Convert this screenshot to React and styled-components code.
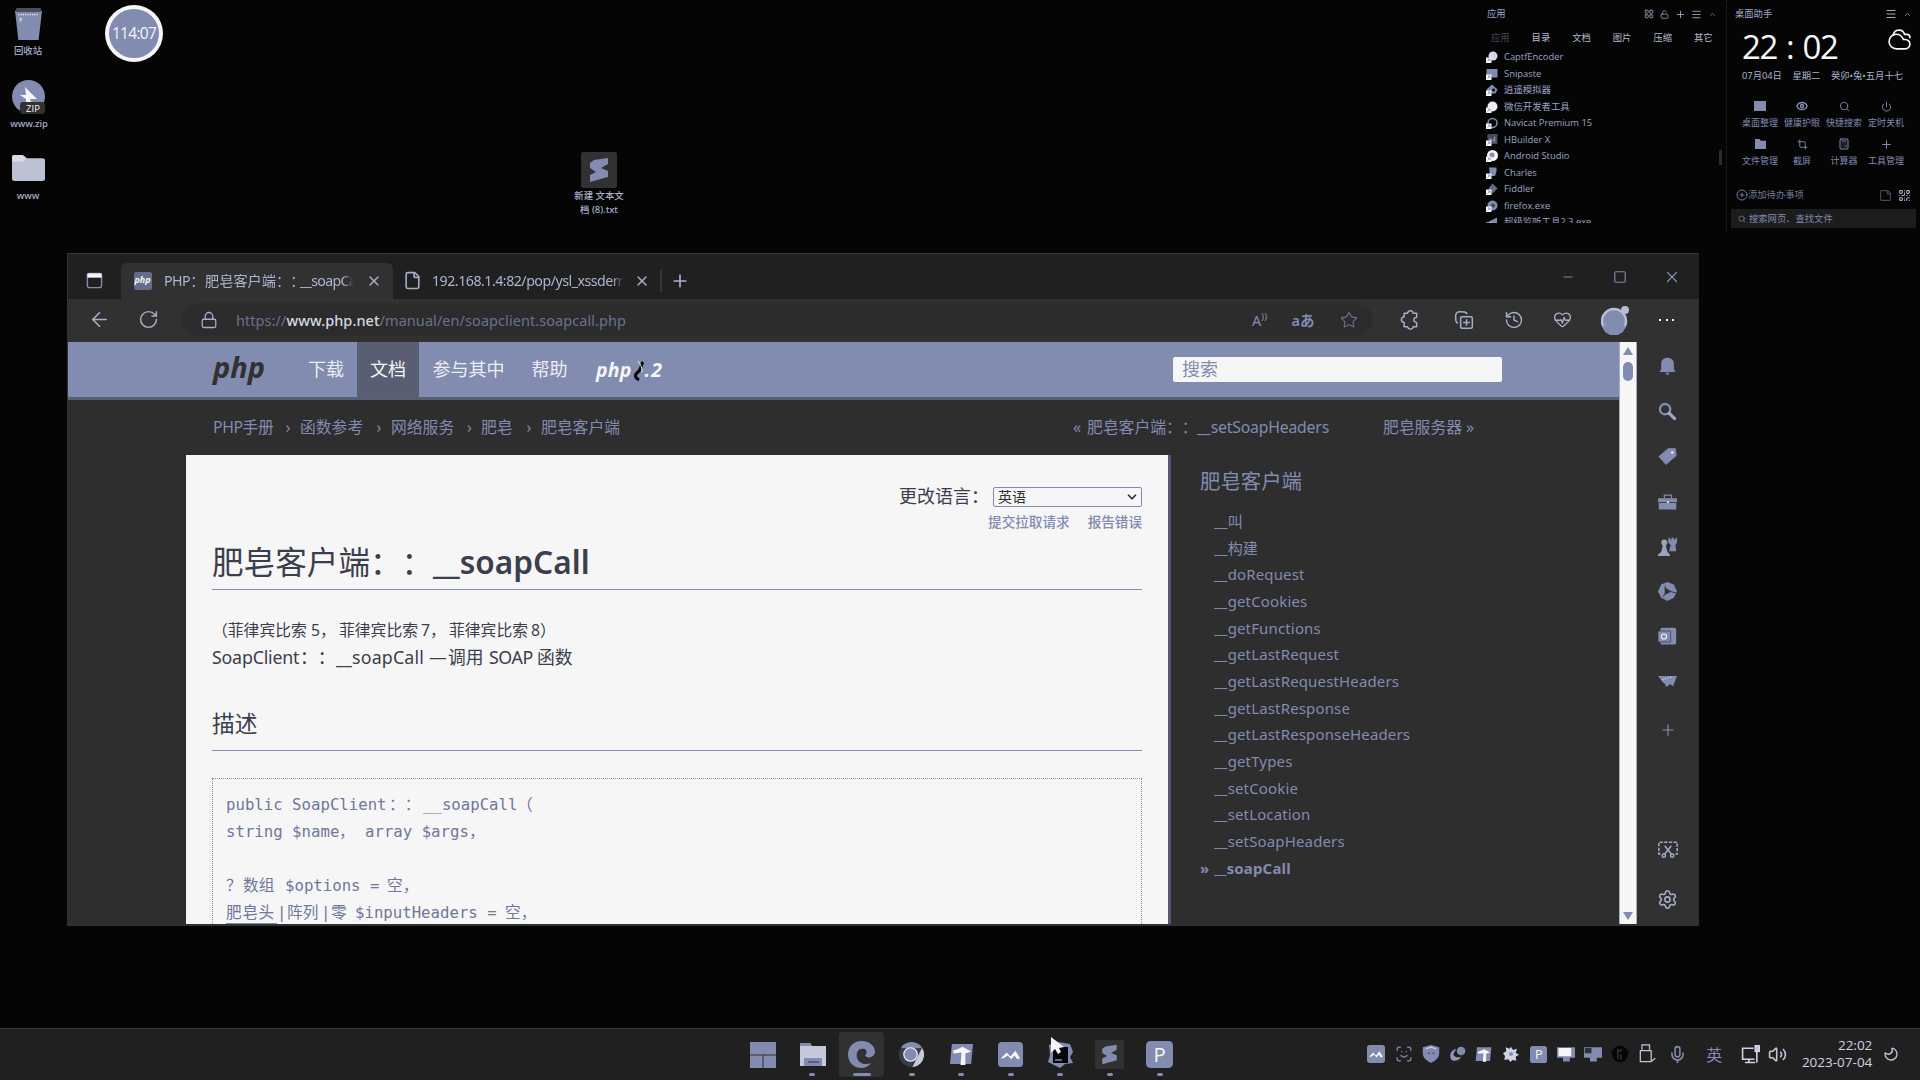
import React from "react";
import styled, { createGlobalStyle, css } from "styled-components";
import {
  ArrowLeft, RotateCw, Lock, Star, History, HeartPulse, X, Plus, File, Menu, ChevronUp,
  Cloudy, Eye, Search, Power, Crop, Calculator, QrCode, CirclePlus, StickyNote, Mic, Volume2, Moon,
  Settings, Minus, Square, LayoutGrid, LockOpen, ScanFace, ChevronDown,
} from "lucide-react";

const ink = "#050505";
const panel = "#313131";
const blue = "#828bb0";
const white = "#f6f6f6";
const sans = `"Noto Sans", "Noto Sans CJK SC", sans-serif`;

const Global = createGlobalStyle`
  html, body { margin: 0; background: ${ink}; }
  * { box-sizing: border-box; }
  svg { display: block; flex: none; }
`;

const Desktop = styled.div`
  position: relative;
  width: 1920px;
  height: 1080px;
  overflow: hidden;
  background: ${ink};
  font-family: ${sans};
  color: ${blue};
  white-space: nowrap;
  text-spacing-trim: space-all;
  font-feature-settings: "chws" 0;
`;

/* ---------- shared ---------- */
const Slot = styled.div`
  width: ${(p) => p.$w}px;
  height: ${(p) => (p.$h ? p.$h + "px" : "auto")};
  flex: none;
  display: flex;
  align-items: center;
  justify-content: center;
`;
const Txt = styled.span`
  display: block;
  flex: none;
  width: ${(p) => (p.$w ? p.$w + "px" : "auto")};
  letter-spacing: ${(p) => p.$ls || 0}px;
`;
const Crescent = styled(Moon)`
  transform: scaleX(-1) rotate(-10deg);
`;

/* ---------- desktop shortcuts ---------- */
const Shortcut = styled.div`
  position: absolute;
  left: ${(p) => p.$x}px;
  top: ${(p) => p.$y}px;
  width: 64px;
  display: flex;
  flex-direction: column;
  align-items: center;
  font: 500 9.4px/13.5px ${sans};
  color: #aab1cc;
  text-align: center;
  white-space: pre;
`;
const Art = styled.div`
  height: ${(p) => p.$h}px;
  margin-bottom: ${(p) => p.$gap}px;
`;
const Timer = styled.div`
  position: absolute;
  left: 105px;
  top: 5px;
  width: 58px;
  height: 57px;
  border-radius: 50%;
  border: 4px solid ${white};
  background: ${blue};
  color: ${white};
  display: flex;
  align-items: center;
  justify-content: center;
  padding-bottom: 1px;
  font: 15.5px/20px "Open Sans", sans-serif;
  letter-spacing: -0.7px;
`;

/* ---------- apps panel ---------- */
const Apps = styled.section`
  position: absolute;
  left: 1484px;
  top: 4px;
  width: 243px;
  height: 219px;
  overflow: hidden;
  font-size: 9.3px;
  line-height: 16px;
  color: #9ba3c3;
`;
const AppsHead = styled.header`
  height: 20px;
  padding-left: 3px;
  display: flex;
  align-items: center;
`;
const HeadIcons = styled.div`
  margin-left: 135px;
  display: flex;
`;
const AppTabs = styled.nav`
  height: 25px;
  padding: 2px 0 0 7px;
  display: flex;
  align-items: center;
  color: #b3bad2;
`;
const AppTab = styled.span`
  flex: none;
  width: 40.6px;
  color: ${(p) => (p.$dim ? "#454857" : "inherit")};
`;
const AppRow = styled.div`
  height: 16.5px;
  padding-left: 2px;
  display: flex;
  align-items: center;
  gap: 6px;
  font-family: "Open Sans", "Noto Sans CJK SC", sans-serif;
  font-size: 9.4px;
`;
const Thumb = styled.div`
  position: absolute;
  left: 1719px;
  top: 150px;
  width: 3px;
  height: 15px;
  background: #2b2b2b;
`;
const Divider = styled.div`
  position: absolute;
  left: 1726px;
  top: 0;
  height: 232px;
  border-left: 1px dotted #242424;
`;

/* ---------- assistant panel ---------- */
const Assist = styled.section`
  position: absolute;
  left: 1731px;
  top: 4px;
  width: 185px;
  font-size: 9.3px;
  line-height: 14px;
`;
const AssistHead = styled.header`
  height: 21px;
  padding: 0 0 1px 4px;
  display: flex;
  align-items: center;
  color: #a3abc8;
`;
const ClockRow = styled.div`
  height: 40px;
  padding: 0 4px 0 11px;
  display: flex;
  align-items: flex-start;
  justify-content: space-between;
  color: ${white};
`;
const CloudBox = styled.div`
  padding-top: 2px;
`;
const Clock = styled.span`
  font: 33px/40px "Open Sans", sans-serif;
  letter-spacing: -1.4px;
  word-spacing: 2px;
  padding-top: 2px;
`;
const DateRow = styled.div`
  height: 22px;
  padding: 0 13px 0 11px;
  display: flex;
  align-items: center;
  justify-content: space-between;
  color: #aab1cc;
`;
const ToolGrid = styled.div`
  margin-top: 12px;
  padding-left: 8px;
  display: grid;
  grid-template-columns: repeat(4, 42px);
  grid-auto-rows: 38px;
`;
const Tool = styled.div`
  display: flex;
  flex-direction: column;
  align-items: center;
  color: ${blue};
  font-size: 9px;
  line-height: 12px;
  gap: 4px;
`;
const ToolIcon = styled.div`
  height: 14px;
  display: flex;
  align-items: center;
`;
const TodoRow = styled.div`
  margin-top: 10px;
  height: 20px;
  padding: 0 5px;
  display: flex;
  align-items: center;
  color: #737b9c;
`;
const FindBar = styled.div`
  margin-top: 4px;
  height: 19px;
  padding-left: 6px;
  background: #1c1c1c;
  display: flex;
  align-items: center;
  gap: 3px;
`;

/* ---------- browser window ---------- */
const Browser = styled.main`
  position: absolute;
  left: 67px;
  top: 253px;
  width: 1632px;
  height: 673px;
  background: ${panel};
  display: flex;
  flex-direction: column;
  border-left: 1px solid ${panel};
  border-top: 1px solid #3a3a3a;
  overflow: hidden;
`;
const TitleBar = styled.div`
  height: 45px;
  flex: none;
  background: #202020;
  display: flex;
  align-items: flex-end;
`;
const Tab = styled.div`
  width: ${(p) => p.$w}px;
  height: 36px;
  padding-bottom: 1px;
  display: flex;
  align-items: center;
  font: 14.2px/20px ${sans};
  ${(p) => p.$active && css`background: ${panel}; border-radius: 6px 6px 0 0;`}
`;
const TabTitle = styled.span`
  display: flex;
  width: ${(p) => p.$w}px;
  letter-spacing: ${(p) => p.$ls}px;
  overflow: hidden;
  color: #adb4ce;
  mask-image: linear-gradient(90deg, #000 94%, transparent);
`;
const Favicon = styled.span`
  width: 18px;
  height: 18px;
  border-radius: 2px;
  background: #656c8a;
  color: ${white};
  font: italic bold 9px/16px ${sans};
  text-align: center;
`;
const TabSep = styled.div`
  width: 2px;
  height: 22px;
  margin-bottom: 7px;
  background: #353535;
`;
const ToolBar = styled.div`
  height: 43px;
  flex: none;
  display: flex;
  align-items: center;
  padding-bottom: 2px;
`;
const Address = styled.div`
  width: 1191px;
  height: 33px;
  border-radius: 17px;
  background: #2c2c2c;
  display: flex;
  align-items: center;
  font: 14.5px/20px ${sans};
  color: #6a7190;
`;
const Host = styled.b`
  font-weight: 500;
  color: #d5d8e4;
`;
const Url = styled.span`
  width: 1008px;
  letter-spacing: ${(p) => p.$ls}px;
`;
const AddrText = styled.span`
  color: ${blue};
  font-weight: ${(p) => (p.$strong ? 600 : 400)};
`;
const Body = styled.div`
  flex: none;
  height: 583px;
  display: flex;
`;
const Page = styled.div`
  width: 1551px;
  height: 582px;
  overflow: hidden;
  background: #2e2e2e;
`;
const PhpNav = styled.nav`
  height: 58px;
  background: ${blue};
  border-bottom: 3px solid #5a5f72;
  display: flex;
  align-items: center;
  font: 18px/54px ${sans};
  color: #eceef4;
`;
const PhpLogo = styled.span`
  width: 227px;
  padding: 0 0 6px 145px;
  font: italic bold 29px/44px "Open Sans", sans-serif;
  color: ${panel};
`;
const ReleaseLogo = styled.span`
  width: 84px;
  padding-left: 15px;
  display: flex;
  align-items: center;
  font: italic bold 19.5px/50px "Open Sans", sans-serif;
  color: ${white};
`;
const NavItem = styled.a`
  padding: 0 ${(p) => p.$px || 13}px;
  height: 55px;
  background: ${(p) => (p.$on ? "#595e72" : "transparent")};
  color: ${(p) => (p.$on ? white : "inherit")};
`;
const SearchBox = styled.div`
  margin-left: 508px;
  width: 329px;
  height: 25px;
  margin-bottom: 1px;
  padding-left: 9px;
  border-radius: 2px;
  background: ${white};
  color: ${blue};
  line-height: 24px;
`;
const Crumbs = styled.div`
  height: 55px;
  padding: 0 0 1px 145px;
  display: flex;
  align-items: center;
  font: 15.8px/20px ${sans};
`;
const Columns = styled.div`
  display: flex;
  align-items: flex-start;
  padding-left: 118px;
`;
const Article = styled.article`
  width: 982px;
  height: 480px;
  padding: 27px 26px 0;
  background: ${white};
  color: #3b3e4c;
`;
const LangRow = styled.div`
  height: 28px;
  display: flex;
  align-items: center;
  justify-content: flex-end;
  font-size: 18px;
  line-height: 28px;
`;
const Select = styled.div`
  width: 149px;
  height: 20px;
  margin: 1px 0 0 4px;
  padding: 0 2px 0 4px;
  border: 1px solid ${blue};
  border-radius: 2px;
  display: flex;
  align-items: center;
  justify-content: space-between;
  font-size: 14px;
  line-height: 18px;
  color: ${panel};
`;
const EditLinks = styled.div`
  margin-top: 2px;
  height: 20px;
  display: flex;
  justify-content: flex-end;
  gap: 18px;
  font: 500 13.6px/19px ${sans};
  color: ${blue};
`;
const H1 = styled.h1`
  margin: 8px 0 0;
  padding-bottom: 5px;
  border-bottom: 1px solid ${blue};
  display: flex;
  font: 400 31.6px/44px ${sans};
`;
const H1Name = styled.span`
  font-weight: 600;
`;
const VerInfo = styled.p`
  margin: 27px 0 0;
  display: flex;
  font: 15.8px/26px ${sans};
`;
const RefName = styled.p`
  margin: 1px 0 0;
  display: flex;
  font: 17.8px/26px ${sans};
`;
const H2 = styled.h2`
  margin: 39px 0 0;
  padding-bottom: 11px;
  border-bottom: 1px solid ${blue};
  font: 22.7px/30px ${sans};
`;
const Synopsis = styled.div`
  margin-top: 27px;
  height: 180px;
  padding: 12px 13px;
  border: 1px dotted ${blue};
  font: 15.7px/27px "DejaVu Sans Mono", "Noto Sans CJK SC", monospace;
  color: #6f779b;
`;
const CodeLine = styled.div`
  height: 27px;
  display: flex;
`;
const Linked = styled.span`
  width: 51px;
  height: 25px;
  letter-spacing: 0.6px;
  border-bottom: 1px solid ${blue};
`;
const Aside = styled.aside`
  width: 420px;
  height: 480px;
  border-left: 3px solid #545971;
  padding: 11px 0 0 29px;
`;
const AsideTitle = styled.div`
  font-size: 20.4px;
  line-height: 30px;
  margin-bottom: 11.5px;
`;
const Method = styled.div`
  height: 26.7px;
  display: flex;
  align-items: center;
  font-size: 15px;
  letter-spacing: 0.15px;
  font-weight: ${(p) => (p.$on ? 700 : 400)};
`;
const Marker = styled.span`
  width: 14px;
`;
const ScrollBar = styled.div`
  width: 18px;
  height: 582px;
  background: ${white};
  border-left: 1px solid #a6acc5;
  border-right: 1px solid #a6acc5;
  display: flex;
  flex-direction: column;
  align-items: center;
  padding: 5px 0 4px;
`;
const Arrow = styled.div`
  border: 5px solid transparent;
  ${(p) => (p.$down
    ? css`border-top: 8px solid ${blue}; border-bottom: 0; margin-top: auto;`
    : css`border-bottom: 8px solid ${blue}; border-top: 0;`)}
`;
const Grip = styled.div`
  margin-top: 7px;
  width: 10px;
  height: 19px;
  border-radius: 5px;
  background: ${blue};
`;
const SideBar = styled.div`
  width: 61px;
  display: flex;
  flex-direction: column;
  align-items: center;
  padding-top: 2px;
`;

/* ---------- taskbar ---------- */
const TaskBar = styled.footer`
  position: absolute;
  left: 0;
  top: 1028px;
  width: 1920px;
  height: 52px;
  padding-left: 738px;
  background: #202020;
  border-top: 1px solid #3a3a3a;
  display: flex;
  align-items: center;
`;
const TaskItem = styled.div`
  width: 49.6px;
  height: 50px;
  padding-top: 2px;
  display: flex;
  flex-direction: column;
  align-items: center;
`;
const TaskTile = styled.div`
  width: 45px;
  height: 45px;
  padding: 9px 0 1px;
  border-radius: 4px;
  background: ${(p) => (p.$on ? panel : "transparent")};
  display: flex;
  flex-direction: column;
  align-items: center;
  justify-content: space-between;
`;
const Bar = styled.div`
  width: ${(p) => p.$w}px;
  height: 3px;
  border-radius: 2px;
  background: ${blue};
`;
const LetterTile = styled.div`
  width: ${(p) => p.$s}px;
  height: ${(p) => p.$s}px;
  border-radius: ${(p) => p.$s / 6}px;
  background: ${blue};
  color: ${white};
  font: ${(p) => p.$s * 0.75}px/${(p) => p.$s}px "Open Sans", sans-serif;
  text-align: center;
`;
const Tray = styled.div`
  margin-left: 178px;
  display: flex;
  align-items: center;
  padding-bottom: 1px;
  color: ${blue};
`;
const TrayClock = styled.div`
  width: 85px;
  padding-bottom: 1px;
  font: 13.5px/17px "Open Sans", sans-serif;
  color: #d0d4e2;
  text-align: right;
`;
const Cursor = styled.div`
  position: absolute;
  left: 1050px;
  top: 1036px;
`;

/* ---------- drawings ---------- */
const Svg = ({ s = 24, w, h, vb = 24, children }) => (
  <svg width={w || s} height={h || s} viewBox={`0 0 ${vb} ${vb}`} preserveAspectRatio="none" fill={blue}>{children}</svg>
);
const SublimeMark = ({ s = 36 }) => (
  <Svg s={s} vb={36}>
    <rect width="36" height="36" rx="2" fill={panel} />
    <path d="M27 6v6l-7 4 7 3v6L9 30v-7l6-3-6-4v-5l4-3z" />
  </Svg>
);
const Folder = ({ w = 33, h = 26 }) => (
  <Svg w={w} h={h}>
    <path d="M0 2q0-2 2-2h6l3 3h11q2 0 2 2v17q0 2-2 2H2q-2 0-2-2z" fill="#bcc1d5" />
    <path d="M0 4V2q0-2 2-2h5l3 3-2 3H0z" fill="#d9dce7" />
  </Svg>
);
const Wave = ({ s }) => (
  <Svg s={s} vb={26}>
    <rect width="26" height="26" rx="4" />
    <path d="M3 17l6-6 4 4 5-6 5 8-3 1-3-4-3 4-4-4-4 3z" fill={white} />
  </Svg>
);
const Hammer = ({ s }) => (
  <Svg s={s} vb={26}>
    <path d="M3 2h22l-2 21H1z" />
    <path d="M4 9l6-2 4-2 9 5-6 2v12h-5l1-13-8 1z" fill={white} />
  </Svg>
);
const Edge = ({ s = 27 }) => (
  <Svg s={s} vb={28}>
    <path d="M14 0c8 0 14 5 14 11 0 4-3 6-6 6-4 0-5-2-3-4 1-3-1-5-4-5-4 0-6 3-6 7 0 6 6 10 15 8-3 3-6 5-10 5C6 28 0 22 0 14S6 0 14 0z" />
    <path d="M10 18c2 4 7 6 12 5-4 2-10 1-12-5z" fill={panel} />
  </Svg>
);
const Chrome = ({ s = 27 }) => (
  <Svg s={s} vb={28}>
    <circle cx="14" cy="14" r="13" fill="#3a3c46" />
    <path d="M3 7a13 13 0 0 1 22 0L14 8z" />
    <path d="M25 7a13 13 0 0 1-10 20l5-10z" fill="#c6cadb" />
    <circle cx="13" cy="14" r="7" stroke={white} strokeWidth="1.2" />
  </Svg>
);
const Knot = () => (
  <Svg s={28} vb={28}>
    <path d="M3 4l9-3 12 2 3 8-3 5 3 6-8 1-5 4-6-3-6-3 2-7z" />
    <rect x="7" y="6" width="15" height="16" fill={ink} />
    <path d="M9 19h7" stroke={blue} strokeWidth="1.5" />
  </Svg>
);
const Shield = () => (
  <Svg s={18}><path d="M12 0l11 3v8c0 6-5 10-11 13C6 21 1 17 1 11V3z" /><path d="M5 5l7-2 7 2" stroke={white} fill="none" /><circle cx="9" cy="11" r="1" fill={panel} /><circle cx="15" cy="11" r="1" fill={panel} /></Svg>
);
const Screen = ({ lit }) => (
  <Svg s={18}><path d="M0 3h24v14h-7v5H8v-5H0z" />{lit ? <path d="M2 4h17v11H2z" fill={white} /> : <path d="M1 4h9v7H1z" fill={panel} />}</Svg>
);
const Usb = () => (
  <Svg s={20}><g fill="none" stroke="#c0c5d8" strokeWidth="1.5"><path d="M6 7V1h9v6M4 8h13v13H4zM17 21l5-4" /></g></Svg>
);
const Network = () => (
  <Svg s={19}><g fill="none" stroke="#d0d4e2" strokeWidth="2"><path d="M16 4H2v14h15M5 22h13M10 18v4" /><rect x="18" y="1" width="5" height="7" fill="#c0c5d8" /><path d="M20 8v14" /></g></Svg>
);
const Avatar = () => (
  <svg width="30" height="30" viewBox="0 0 30 30">
    <circle cx="13" cy="16" r="12" fill={blue} stroke="#b7bdd3" strokeWidth="2.5" />
    <path d="M1 21h24l-3 6-5 3H9l-5-3z" fill={blue} />
    <circle cx="24" cy="5" r="4" fill="#b7bdd3" />
  </svg>
);
const dotIcons = {
  bell: <path d="M12 1c5 0 8 3 8 8v6l2 4H2l2-4V9c0-5 3-8 8-8zM9 20h6l-3 3z" />,
  lens: <g><circle cx="9" cy="9" r="6.5" fill="none" stroke={blue} strokeWidth="3" /><path d="M14 14l7 7" stroke="#a0a8c6" strokeWidth="4" strokeLinecap="round" /></g>,
  tag: <g><path d="M1 12L13 2l9 0 1 9-13 11z" strokeLinejoin="round" stroke={blue} /><circle cx="18" cy="7" r="1.6" fill={white} /></g>,
  box: <g><path d="M0 8h24v5H0zM1 14h22v8H1z" /><path d="M8 8V4h9v4" fill="none" stroke={blue} strokeWidth="1.6" /><circle cx="12.5" cy="13" r="1.3" fill={white} /></g>,
  chess: <g><path d="M13 1h2v2h2V1h3v2h2V1h2v6l-2 3 1 8h-9l2-8-3-3z" /><path d="M8 3c3 0 4 2 4 5l-2 3 2 8 3 3v2H0v-2l4-3 2-8-2-3c0-3 1-5 4-5z" fill="#9aa2c1" /></g>,
  play: <g><path d="M12 0l8 3 4 9-4 8-8 4-8-4-4-8 4-9z" /><path d="M9 7l8 5-8 4z" fill={panel} /><path d="M9 5V16M16 12l7 2M6 18l4-3" stroke={panel} strokeWidth="1.2" /></g>,
  mail: <g><rect x="3" y="1" width="20" height="21" rx="2" /><rect x="0" y="5" width="16" height="14" rx="1" stroke={panel} strokeWidth="0.8" /><circle cx="7.5" cy="12" r="3.2" fill="none" stroke={white} strokeWidth="1.4" /></g>,
  plane: <g><path d="M0 5h24l-5 13-4-3-2 2-3 2-1-4-3-2-2-3z" /><path d="M5 10l13-4" stroke={white} strokeDasharray="2 1.5" /></g>,
  snip: <g fill="none" stroke="#a0a8c6" strokeWidth="1.8"><path d="M3 18H1V4h22v14h-2" strokeDasharray="4 1.6" /><path d="M8 8l8 10M16 8L8 18" /><circle cx="7" cy="20" r="2" /><circle cx="17" cy="20" r="2" /></g>,
};

const Shortcuts = () => (
  <>
    <Shortcut $x={-4} $y={8}>
      <Art $h={32} $gap={4}>
        <Svg w={27} h={32}><path d="M0 2h24l-3 22H3z" /><path d="M1 0h22v3H1z" fill="#4b4e5c" /><path d="M3 5h17" stroke={white} strokeDasharray="1 1" /><path d="M4 7l3 1-3 3z" fill="#c5cadb" /></Svg>
      </Art>
      回收站
    </Shortcut>
    <Shortcut $x={-3} $y={80}>
      <Art $h={34} $gap={3}>
        <svg width="34" height="34" viewBox="0 0 34 34">
          <circle cx="16.5" cy="16.5" r="16.5" fill={blue} />
          <path d="M13 7l12 12h-7l2 5h-6v-5l-6-4h6z" fill={white} />
          <rect x="8" y="22" width="25" height="12" rx="3" fill={panel} />
          <text x="21" y="31.5" fontSize="9.5" fontFamily="Open Sans, sans-serif" fill={white} textAnchor="middle">ZIP</text>
        </svg>
      </Art>
      www.zip
    </Shortcut>
    <Shortcut $x={-4} $y={155}>
      <Art $h={26} $gap={8}><Folder /></Art>
      www
    </Shortcut>
    <Shortcut $x={567} $y={152}>
      <Art $h={36} $gap={1}><SublimeMark /></Art>
      {"新建 文本文\n档 (8).txt"}
    </Shortcut>
    <Timer>114:07</Timer>
  </>
);

const appNames = ["CaptfEncoder", "Snipaste", "逍遥模拟器", "微信开发者工具", "Navicat Premium 15", "HBuilder X", "Android Studio", "Charles", "Fiddler", "firefox.exe", "超级监听工具2.3.exe"];
const appArt = [
  <circle cx="14" cy="10" r="9" fill="#d6d9e5" />,
  <path d="M1 2h22v17H1z" />,
  <g><path d="M1 11L12 1l11 10-4 8H4z" /><circle cx="15" cy="12" r="3" fill={ink} /></g>,
  <circle cx="13" cy="11" r="10" fill="#eceef4" />,
  <g><circle cx="13" cy="12" r="9" fill="none" stroke={blue} strokeWidth="3" /></g>,
  <g><rect x="3" y="0" width="20" height="20" fill="#454857" /><path d="M8 8v9M17 5v12M8 12h9" stroke={blue} strokeWidth="3" /></g>,
  <g><circle cx="13" cy="11" r="11" fill={white} /><circle cx="12" cy="10" r="5" /></g>,
  <path d="M6 1h15v8l-3 9H8z" />,
  <path d="M13 1l10 10-10 10L5 11z" fill="#656c8a" />,
  <g><circle cx="13" cy="11" r="10" /><circle cx="14" cy="11" r="4" fill="#454857" /></g>,
  <path d="M4 12L22 3v16z" />,
];
const AppsPanel = () => (
  <>
    <Apps>
      <AppsHead>
        <Txt $w={19}>应用</Txt>
        <HeadIcons>
          <Slot $w={15}><LayoutGrid size={10} /></Slot>
          <Slot $w={16}><LockOpen size={9} /></Slot>
          <Slot $w={16}><Plus size={11} /></Slot>
          <Slot $w={16}><Menu size={11} /></Slot>
          <Slot $w={16}><ChevronUp size={9} color="#777f9f" /></Slot>
        </HeadIcons>
      </AppsHead>
      <AppTabs>
        {["应用", "目录", "文档", "图片", "压缩", "其它"].map((t, i) => <AppTab key={t} $dim={i === 0}>{t}</AppTab>)}
      </AppTabs>
      {appNames.map((n, i) => (
        <AppRow key={n}>
          <Svg s={12}>
            {appArt[i]}
            <rect x="0" y="13" width="11" height="11" fill={white} />
            <path d="M3 21l5-5M4 16h4v4" stroke={blue} strokeWidth="1.5" fill="none" />
          </Svg>
          {n}
        </AppRow>
      ))}
    </Apps>
    <Thumb />
    <Divider />
  </>
);

const tools = [
  ["桌面整理", <Svg w={12} h={10}><path d="M0 0h24v24H0z" /></Svg>],
  ["健康护眼", <Eye size={12} strokeWidth={3} />],
  ["快捷搜索", <Search size={11} />],
  ["定时关机", <Power size={11} />],
  ["文件管理", <Svg w={11} h={10}><path d="M0 0h10l3 4h11v20H0z" /></Svg>],
  ["截屏", <Crop size={11} />],
  ["计算器", <Calculator size={12} />],
  ["工具管理", <Plus size={13} />],
];
const AssistPanel = () => (
  <Assist>
    <AssistHead>
      <Txt $w={148}>桌面助手</Txt>
      <Slot $w={16}><Menu size={12} /></Slot>
      <Slot $w={16}><ChevronUp size={9} /></Slot>
    </AssistHead>
    <ClockRow><Clock>22 : 02</Clock><CloudBox><Cloudy size={25} strokeWidth={1.6} /></CloudBox></ClockRow>
    <DateRow><span>07月04日</span><span>星期二</span><span>癸卯•兔•五月十七</span></DateRow>
    <ToolGrid>
      {tools.map(([t, icon]) => <Tool key={t}><ToolIcon>{icon}</ToolIcon>{t}</Tool>)}
    </ToolGrid>
    <TodoRow>
      <CirclePlus size={12} />
      <Txt $w={131}>添加待办事项</Txt>
      <Slot $w={12}><StickyNote size={13} color="#454857" /></Slot>
      <Slot $w={26}><QrCode size={13} color="#a3abc8" /></Slot>
    </TodoRow>
    <FindBar><Slot $w={9}><Search size={8} /></Slot>搜索网页、查找文件</FindBar>
  </Assist>
);

const crumbs = [["PHP手册", 59, 28, -0.4], ["函数参考", 63, 28, 0], ["网络服务", 63, 27, 0], ["肥皂", 32, 28, 0], ["肥皂客户端", 80, 0, 0]];
const methods = ["叫", "构建", "doRequest", "getCookies", "getFunctions", "getLastRequest", "getLastRequestHeaders", "getLastResponse", "getLastResponseHeaders", "getTypes", "setCookie", "setLocation", "setSoapHeaders", "soapCall"];

const PhpPage = () => (
  <Page>
    <PhpNav>
      <PhpLogo>php</PhpLogo>
      <NavItem>下载</NavItem>
      <NavItem $on>文档</NavItem>
      <NavItem $px={13.5}>参与其中</NavItem>
      <NavItem $px={13.5}>帮助</NavItem>
      <ReleaseLogo>
        <Txt $ls={0.2}>php</Txt>
        <svg width="13" height="24" viewBox="0 0 13 24"><path d="M11 4C8 8 10 11 6 14S3 20 7 22" fill="none" stroke={ink} strokeWidth="3" /><path d="M6 3c2 3 4 5 4 11" fill="none" stroke={white} /></svg>
        <Txt $ls={1}>.2</Txt>
      </ReleaseLogo>
      <SearchBox>搜索</SearchBox>
    </PhpNav>
    <Crumbs>
      {crumbs.map(([t, w, sep, ls]) => (
        <React.Fragment key={t}><Txt $w={w} $ls={ls}>{t}</Txt>{sep > 0 && <Slot $w={sep}>&nbsp;›</Slot>}</React.Fragment>
      ))}
      <Txt $w={452} />
      <Txt $w={14}>«</Txt><Txt $w={110}>肥皂客户端：：</Txt><Txt $w={186} $ls={-0.2}>__setSoapHeaders</Txt>
      <Txt>肥皂服务器 »</Txt>
    </Crumbs>
    <Columns>
      <Article>
        <LangRow>更改语言：<Select>英语<ChevronDown size={14} strokeWidth={3} /></Select></LangRow>
        <EditLinks><span>提交拉取请求</span><span>报告错误</span></EditLinks>
        <H1><Txt $w={221}>肥皂客户端：：</Txt><H1Name>__soapCall</H1Name></H1>
        <VerInfo><Txt $w={99}>（菲律宾比索</Txt><Txt $w={28}>5，</Txt><Txt $w={82}>菲律宾比索</Txt><Txt $w={28}>7，</Txt><Txt $w={82}>菲律宾比索</Txt><Txt>8）</Txt></VerInfo>
        <RefName><Txt $w={88} $ls={-0.2}>SoapClient</Txt><Txt $w={36}>：：</Txt><Txt $w={93} $ls={0.15}>__soapCall</Txt><Txt $w={19}>—</Txt><Txt $w={41}>调用</Txt><Txt $w={48} $ls={-0.4}>SOAP</Txt><Txt>函数</Txt></RefName>
        <H2>描述</H2>
        <Synopsis>
          <CodeLine><Txt $w={163}>public SoapClient</Txt><Txt $w={34}>：：</Txt><Txt $w={94}>__soapCall</Txt><Txt>（</Txt></CodeLine>
          <CodeLine><Txt $w={113}>string $name</Txt><Txt $w={26}>，</Txt><Txt $w={104}>array $args</Txt><Txt>，</Txt></CodeLine>
          <CodeLine />
          <CodeLine><Txt $w={17}>？</Txt><Txt $w={42}>数组</Txt><Txt $w={102}>$options =</Txt><Txt>空，</Txt></CodeLine>
          <CodeLine><Linked>肥皂头</Linked><Txt $w={10}>|</Txt><Txt $w={34}>阵列</Txt><Txt $w={10}>|</Txt><Txt $w={24}>零</Txt><Txt $w={150}>$inputHeaders =</Txt><Txt>空，</Txt></CodeLine>
        </Synopsis>
      </Article>
      <Aside>
        <AsideTitle>肥皂客户端</AsideTitle>
        {methods.map((m) => (
          <Method key={m} $on={m === "soapCall"}><Marker>{m === "soapCall" ? "»" : ""}</Marker>__{m}</Method>
        ))}
      </Aside>
    </Columns>
  </Page>
);

const tint = "#a6aeca";
const BrowserWindow = () => (
  <Browser>
    <TitleBar>
      <Slot $w={53} $h={37}>
        <Svg s={17}><rect x="2" y="2" width="20" height="20" rx="3" fill="none" stroke={blue} strokeWidth="2" /><path d="M2 2h20v6H2z" fill={white} /></Svg>
      </Slot>
      <Tab $w={272} $active>
        <Slot $w={43}><Favicon>php</Favicon></Slot>
        <TabTitle $w={190} $ls={-0.1}><Txt $w={41} $ls={-0.5}>PHP：</Txt><Txt $w={71}>肥皂客户端</Txt><Txt $w={24}>：：</Txt><Txt $ls={-0.7}>__soapCall</Txt></TabTitle>
        <Slot $w={39}><X size={16} color={tint} strokeWidth={2.2} /></Slot>
      </Tab>
      <Tab $w={267}>
        <Slot $w={39}><File size={19} color={tint} /></Slot>
        <TabTitle $w={192} $ls={-0.5}>192.168.1.4:82/pop/ysl_xssdemo</TabTitle>
        <Slot $w={36}><X size={16} color={tint} strokeWidth={2.2} /></Slot>
      </Tab>
      <TabSep />
      <Slot $w={36} $h={37}><Plus size={20} color={tint} /></Slot>
      <Txt $w={844} />
      <Slot $w={52} $h={45}><Minus size={14} strokeWidth={1.6} /></Slot>
      <Slot $w={52} $h={45}><Square size={14} strokeWidth={2} /></Slot>
      <Slot $w={52} $h={45}><X size={18} strokeWidth={1.6} /></Slot>
    </TitleBar>
    <ToolBar>
      <Txt $w={7} />
      <Slot $w={48}><ArrowLeft size={23} color={tint} strokeWidth={1.7} /></Slot>
      <Slot $w={50}><RotateCw size={21} color={tint} strokeWidth={1.7} /></Slot>
      <Txt $w={9} />
      <Address>
        <Slot $w={54}><Lock size={18} color={tint} strokeWidth={1.7} /></Slot>
        <Url $ls={0.06}>https://<Host>www.php.net</Host>/manual/en/soapclient.soapcall.php</Url>
        <Slot $w={32}><AddrText>A⁾⁾</AddrText></Slot>
        <Slot $w={54}><AddrText $strong>aあ</AddrText></Slot>
        <Slot $w={38}><Star size={18} strokeWidth={1.5} /></Slot>
      </Address>
      <Txt $w={9} />
      <Slot $w={56}>
        <svg width="20" height="20" viewBox="0 0 24 24" fill="none" stroke={tint} strokeWidth="1.8" strokeLinejoin="round"><path d="M9 4c1-4 6-4 7 0h4v5c-4-1-5 6 0 6v5h-4c-1 4-6 4-7 0H5v-5c-5-1-4-6 0-7V4z" /></svg>
      </Slot>
      <Slot $w={52}>
        <svg width="20" height="20" viewBox="0 0 24 24" fill="none" stroke={tint} strokeWidth="1.8"><rect x="8" y="8" width="14" height="14" rx="2" /><path d="M15 11v8M11 15h8M5 16c-3-1-3-3-3-9 0-3 2-5 5-5 6 0 7 0 9 3" /></svg>
      </Slot>
      <Slot $w={47}><History size={20} color={tint} strokeWidth={1.7} /></Slot>
      <Slot $w={51}><HeartPulse size={19} color={tint} strokeWidth={1.7} /></Slot>
      <Slot $w={56}><Avatar /></Slot>
      <Slot $w={46}><svg width="16" height="4"><g fill={white}><rect x="0" y="1" width="2" height="2" /><rect x="7" y="1" width="2" height="2" /><rect x="13" y="1" width="2" height="2" /></g></svg></Slot>
    </ToolBar>
    <Body>
      <PhpPage />
      <ScrollBar><Arrow /><Grip /><Arrow $down /></ScrollBar>
      <SideBar>
        {["bell", "lens", "tag", "box", "chess", "play", "mail", "plane"].map((k) => (
          <Slot key={k} $w={61} $h={45}><Svg s={19}>{dotIcons[k]}</Svg></Slot>
        ))}
        <Slot $w={61} $h={52}><Plus size={18} strokeWidth={1.6} /></Slot>
        <Slot $w={61} $h={68} />
        <Slot $w={61} $h={49}><Svg s={20}>{dotIcons.snip}</Svg></Slot>
        <Slot $w={61} $h={52}><Settings size={21} color={tint} strokeWidth={1.8} /></Slot>
      </SideBar>
    </Body>
  </Browser>
);

const tasks = [
  [<Svg s={26} vb={26}><path d="M0 0h26v26H0z" /><path d="M0 13h26M13 13v13" stroke={panel} strokeWidth="1" /></Svg>, 0],
  [<svg width="27" height="25" viewBox="0 0 27 25"><path d="M1 1h10l2 3h14v20H1z" fill="#c5cadb" /><path d="M1 1h10l2 3H1z" fill={blue} /><path d="M5 16h18v8H5z" fill={blue} /><path d="M9 20h11" stroke={panel} /></svg>, 6],
  [<Edge />, 18], [<Chrome />, 6], [<Hammer s={25} />, 6], [<Wave s={25} />, 6], [<Knot />, 6], [<SublimeMark s={29} />, 6], [<LetterTile $s={27}>P</LetterTile>, 6],
];
const TaskBarView = () => (
  <TaskBar>
    {tasks.map(([icon, w], i) => (
      <TaskItem key={i}><TaskTile $on={w === 18}><Slot $w={30} $h={28}>{icon}</Slot><Bar $w={w} /></TaskTile></TaskItem>
    ))}
    <Tray>
      <Slot $w={28}><Wave s={18} /></Slot>
      <Slot $w={27}><ScanFace size={18} color="#777f9f" /></Slot>
      <Slot $w={27}><Shield /></Slot>
      <Slot $w={26}><Svg s={17}><circle cx="17" cy="7" r="6" /><path d="M10 4C3 6 0 12 3 19c4 4 12 1 14-4-5 2-9 1-11-3z" fill="#8f98ba" /></Svg></Slot>
      <Slot $w={27}><Hammer s={17} /></Slot>
      <Slot $w={28}><Svg s={16}><path d="M12 1l3 5 6-2-2 6 5 3-5 3 1 6-6-1-3 3-3-4-6 1 1-6-3-4 5-3-1-6 6 2z" fill="#cfd3e1" /><circle cx="12" cy="12" r="3" /></Svg></Slot>
      <Slot $w={27}><LetterTile $s={17}>P</LetterTile></Slot>
      <Slot $w={27}><Screen lit /></Slot>
      <Slot $w={27}><Screen /></Slot>
      <Slot $w={27}><Svg s={18}><circle cx="12" cy="12" r="11" fill={ink} /><path d="M9 5v14M9 9l6-3M13 12v8" stroke={panel} strokeWidth="2" /></Svg></Slot>
      <Slot $w={28}><Usb /></Slot>
      <Slot $w={33}><Mic size={19} /></Slot>
      <Slot $w={40}><Txt>英</Txt></Slot>
      <Slot $w={33}><Network /></Slot>
      <Slot $w={20}><Volume2 size={19} color="#c0c5d8" /></Slot>
      <TrayClock>22:02<br />2023-07-04</TrayClock>
      <Slot $w={38}><Crescent size={16} color="#c0c5d8" /></Slot>
    </Tray>
  </TaskBar>
);

export default function App() {
  return (
    <Desktop>
      <Global />
      <Shortcuts />
      <AppsPanel />
      <AssistPanel />
      <BrowserWindow />
      <TaskBarView />
      <Cursor><svg width="14" height="20" viewBox="0 0 14 20"><path d="M1 1v16l4-4 3 5 3-2-2-4 5-1z" fill={white} /></svg></Cursor>
    </Desktop>
  );
}
